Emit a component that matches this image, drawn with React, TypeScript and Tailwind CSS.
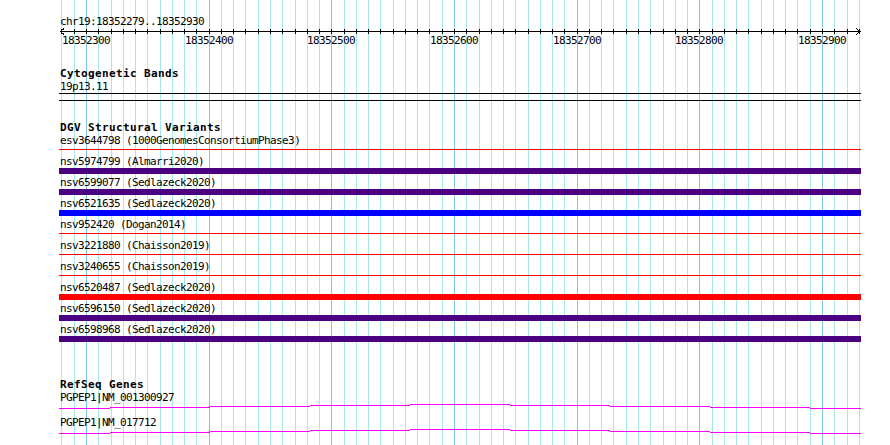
import React from "react";

// bp offset from 18352300 -> pixel x on the page
const SCALE = 1.2267;
const px = (d: number) => Math.round(86 + d * SCALE);
const ticks = Array.from({ length: 66 }, (_, i) => -20 + i * 10);
const majors = [0, 100, 200, 300, 400, 500, 600];

const variants = [
  { id: "esv3644798", study: "1000GenomesConsortiumPhase3", color: "bg-[#ff0000]", thick: false },
  { id: "nsv5974799", study: "Almarri2020", color: "bg-[#4b0082]", thick: true },
  { id: "nsv6599077", study: "Sedlazeck2020", color: "bg-[#4b0082]", thick: true },
  { id: "nsv6521635", study: "Sedlazeck2020", color: "bg-[#0000ff]", thick: true },
  { id: "nsv952420", study: "Dogan2014", color: "bg-[#ff0000]", thick: false },
  { id: "nsv3221880", study: "Chaisson2019", color: "bg-[#ff0000]", thick: false },
  { id: "nsv3240655", study: "Chaisson2019", color: "bg-[#ff0000]", thick: false },
  { id: "nsv6520487", study: "Sedlazeck2020", color: "bg-[#ff0000]", thick: true },
  { id: "nsv6596150", study: "Sedlazeck2020", color: "bg-[#4b0082]", thick: true },
  { id: "nsv6598968", study: "Sedlazeck2020", color: "bg-[#4b0082]", thick: true },
];

const genes = ["PGPEP1|NM_001300927", "PGPEP1|NM_017712"];
const steps = [5, 4, 3, 2, 1, 2, 3, 4, 5];

// label text: 6px / 7px per character like the original bitmap fonts
const small = "h-[10px] whitespace-pre text-[11px] leading-[10px] tracking-[-0.62px]";
const title = "h-[12px] text-[11px] font-bold leading-[12px] tracking-[0.38px]";

function Grid() {
  return (
    <svg className="absolute inset-0" width={890} height={445} shapeRendering="crispEdges">
      {ticks.map((d) => (
        <line
          key={d}
          x1={px(d) + 0.5}
          x2={px(d) + 0.5}
          y1={0}
          y2={445}
          stroke={d % 100 === 0 ? "#80c6ec" : "#a6e8ee"}
        />
      ))}
    </svg>
  );
}

function Ruler() {
  return (
    <div className="relative h-[18px] w-[801px]">
      <svg width={801} height={9} shapeRendering="crispEdges" className="block">
        <line x1={0} x2={801} y1={4.5} y2={4.5} stroke="#000" />
        <polyline points="4,1.5 0.5,4.5 4,7.5" fill="none" stroke="#000" />
        <polyline points="796,1.5 800.5,4.5 796,7.5" fill="none" stroke="#000" />
        {ticks.map((d) => (
          <line key={d} x1={px(d) - 60 + 0.5} x2={px(d) - 60 + 0.5} y1={2} y2={7} stroke="#000" />
        ))}
      </svg>
      {majors.map((d) => (
        <span
          key={d}
          className={`absolute top-[9px] w-[48px] text-center ${small}`}
          style={{ left: px(d) - 60 - 24 }}
        >
          {18352300 + d}
        </span>
      ))}
    </div>
  );
}

function GeneLine() {
  return (
    <svg width={802} height={8} shapeRendering="crispEdges" className="-ml-px block">
      {steps.map((y, i) => (
        <line
          key={i}
          x1={i === 0 ? 0 : 51 + (i - 1) * 100}
          x2={i === 8 ? 802 : 51 + i * 100}
          y1={y + 0.5}
          y2={y + 0.5}
          stroke="#ff00ff"
        />
      ))}
    </svg>
  );
}

export default function App() {
  return (
    <div className="relative h-[445px] w-[890px] overflow-hidden bg-white text-black font-['DejaVu_Sans_Mono',monospace]">
      <Grid />
      <div className="relative flex flex-col pl-[60px] pt-[17px]">
        <div className={small}>chr19:18352279..18352930</div>
        <Ruler />

        <div className={`mt-[23px] ${title}`}>Cytogenetic Bands</div>
        <div className={`mt-[2px] ${small}`}>19p13.11</div>
        <div className="-ml-px mt-[1px] h-[8px] w-[802px] border-y border-black" />

        <div className={`mt-[21px] ${title}`}>DGV Structural Variants</div>
        <div className="mt-[2px] flex flex-col">
          {variants.map((v) => (
            <div key={v.id} className="h-[21px]">
              <div className={small}>
                {v.id} ({v.study})
              </div>
              {v.thick ? (
                <div className={`-ml-px mt-[1px] h-[6px] w-[802px] ${v.color}`} />
              ) : (
                <div className={`-ml-px mt-[3px] h-[1px] w-[802px] ${v.color}`} />
              )}
            </div>
          ))}
        </div>

        <div className={`mt-[33px] ${title}`}>RefSeq Genes</div>
        <div className="mt-[2px] flex flex-col">
          {genes.map((g) => (
            <div key={g} className="h-[25px]">
              <div className={small}>{g}</div>
              <GeneLine />
            </div>
          ))}
        </div>
      </div>
    </div>
  );
}
